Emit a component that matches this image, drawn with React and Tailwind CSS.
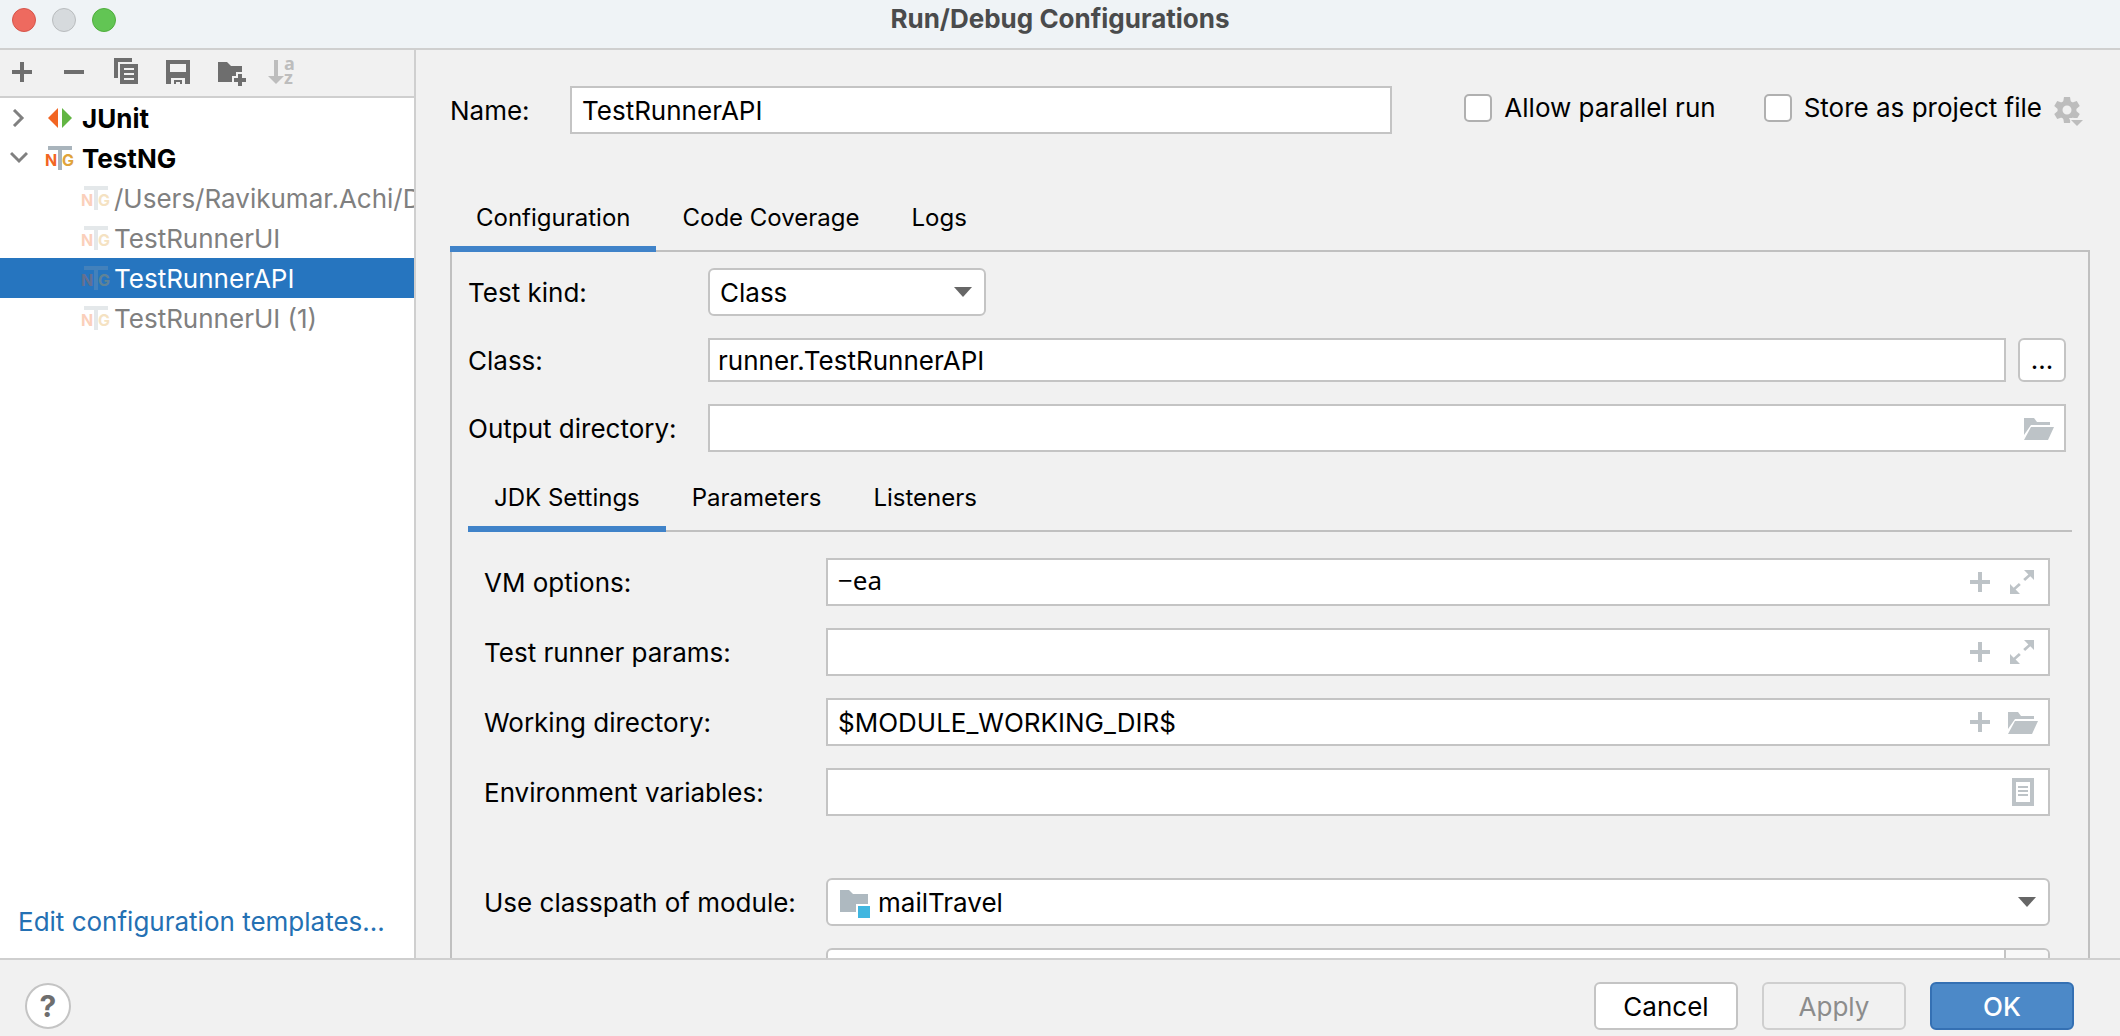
import React from "react";

function Folder({ className = "" }) {
  return (
    <svg width="32" height="32" viewBox="0 0 32 32" className={"shrink-0 " + className} fill="currentColor">
      <path d="M2 6h10l3 4h13v3H9L2 23z" />
      <path d="M9 15h23l-6 13H2z" />
    </svg>
  );
}
function Plus({ className = "" }) {
  return (
    <svg width="32" height="32" viewBox="0 0 32 32" className={"shrink-0 " + className} fill="currentColor">
      <path d="M14 6h4v8h8v4h-8v8h-4v-8H6v-4h8z" />
    </svg>
  );
}
function Expand() {
  return (
    <svg width="32" height="32" viewBox="0 0 32 32" className="shrink-0" fill="currentColor">
      <path d="M18 4h10v10l-3.700-3.700-5.200 4.700-1.900-2 5.200-4.600z" />
      <path d="M14 28H4V18l3.700 3.700 5.200-4.700 1.900 2-5.200 4.600z" />
    </svg>
  );
}
function Doc() {
  return (
    <svg width="32" height="32" viewBox="0 0 32 32" className="shrink-0" fill="currentColor">
      <path fillRule="evenodd" d="M6 2h22v28H6zM10 6v20h14V6z" />
      <path d="M12 10h10v2H12zM12 14h10v2H12zM12 18h10v2H12z" />
    </svg>
  );
}
function NG({ faded }) {
  return (
    <svg width="32" height="32" viewBox="0 0 32 32" className={faded ? "shrink-0 opacity-30" : "shrink-0"}>
      <path d="M4 4h24v4H18v20h-4V8H4z" fill="#9AA7B0" fillOpacity=".85" />
      <text x="1" y="24" fontSize="16" fontWeight="700" fill="#F26522">N</text>
      <text x="18" y="24" fontSize="16" fontWeight="700" fill="#E0A33A">G</text>
    </svg>
  );
}
function Caret() {
  return (
    <svg width="18" height="10" viewBox="0 0 18 10" className="pointer-events-none absolute right-3.5 top-1/2 -translate-y-1/2" fill="#666">
      <path d="M0 0h18L9 10z" />
    </svg>
  );
}

function Field({ id, label, value = "", plain, icons }) {
  return (
    <div className="flex items-center">
      <label htmlFor={id} className="w-[342px] shrink-0 pt-0.5">{label}</label>
      <div className="flex h-12 flex-1 items-center gap-2.5 border-2 border-[#c4c4c4] bg-white pr-2.5 text-[#bdc3c7]">
        <input
          id={id}
          defaultValue={value}
          className={"h-full min-w-0 flex-1 bg-transparent px-2.5 text-black outline-none " + (plain ? "pb-1 font-['Noto_Sans',sans-serif]" : "")}
        />
        {icons}
      </div>
    </div>
  );
}

function Tabs({ items }) {
  return (
    <div role="tablist" className="flex text-2xl">
      {items.map((t, i) => (
        <button
          key={t}
          role="tab"
          aria-selected={i === 0}
          className={"-mb-0.5 h-16 border-b-6 px-[26px] pt-0.5 " + (i === 0 ? "border-[#4083c9]" : "border-transparent")}
        >
          {t}
        </button>
      ))}
    </div>
  );
}

const runs = [
  { name: "/Users/Ravikumar.Achi/Desktop" },
  { name: "TestRunnerUI" },
  { name: "TestRunnerAPI", selected: true },
  { name: "TestRunnerUI (1)" },
];

function Toolbar() {
  return (
    <div className="flex h-12 shrink-0 items-center gap-5 border-b-2 border-[#cfcfcf] px-1.5 pb-0.5 text-[#6e6e6e]">
      <button aria-label="Add"><Plus /></button>
      <button aria-label="Remove">
        <svg width="32" height="32" viewBox="0 0 32 32" fill="currentColor"><path d="M6 14h20v4H6z" /></svg>
      </button>
      <button aria-label="Copy">
        <svg width="32" height="32" viewBox="0 0 32 32" fill="currentColor">
          <path d="M4 2h18v4H8v16H4z" />
          <path fillRule="evenodd" d="M10 8h18v20H10zM14 12v2h10v-2zM14 17v2h10v-2zM14 22v2h10v-2z" />
        </svg>
      </button>
      <button aria-label="Save">
        <svg width="32" height="32" viewBox="0 0 32 32" fill="currentColor">
          <path fillRule="evenodd" d="M4 4h24v24h-5v-6H9v6H4zM8 8v8h16V8z" />
          <path d="M12 24h8v4h-2v-2h-4v2h-2z" />
        </svg>
      </button>
      <button aria-label="New folder">
        <svg width="32" height="32" viewBox="0 0 32 32" fill="currentColor">
          <path d="M4 6h9l4 4h11v6h-6v4h-4v6H4z" />
          <path d="M24 18h4v4h4v4h-4v4h-4v-4h-4v-4h4z" />
        </svg>
      </button>
      <button aria-label="Sort" className="text-[#bdbdbd]">
        <svg width="32" height="32" viewBox="0 0 32 32" fill="currentColor" className="overflow-visible">
          <path d="M8 4h4v16h6l-8 8-8-8h6z" />
          <text x="18" y="14" fontSize="18" fontWeight="700" fontFamily="Noto Sans, sans-serif">a</text>
          <text x="18" y="28" fontSize="18" fontWeight="700" fontFamily="Noto Sans, sans-serif">z</text>
        </svg>
      </button>
    </div>
  );
}

function Sidebar() {
  return (
    <aside className="flex w-[416px] shrink-0 flex-col border-r-2 border-[#cfcfcf]">
      <Toolbar />
      <div className="flex flex-1 flex-col justify-between bg-white">
        <ul>
          <li className="flex h-10 items-center pl-2.5 font-bold">
            <svg width="18" height="18" viewBox="0 0 18 18" className="mr-4" fill="none" stroke="#808080" strokeWidth="3"><path d="M4 1l8 8-8 8" /></svg>
            <svg width="32" height="32" viewBox="0 0 32 32" className="mr-1.5"><path d="M14 6v20L4 16z" fill="#F26522" /><path d="M18 6v20l10-10z" fill="#62B543" /></svg>
            <span className="pt-0.5">JUnit</span>
          </li>
          <li className="flex h-10 items-center pl-2.5 font-bold">
            <svg width="18" height="18" viewBox="0 0 18 18" className="mr-4" fill="none" stroke="#808080" strokeWidth="3"><path d="M1 4l8 8 8-8" /></svg>
            <div className="mr-1.5"><NG /></div>
            <span className="pt-0.5">TestNG</span>
          </li>
          {runs.map((r) => (
            <li
              key={r.name}
              className={"flex h-10 items-center gap-0.5 overflow-hidden whitespace-nowrap pl-20 " + (r.selected ? "bg-[#2675bf] text-white" : "text-[#808080]")}
            >
              <NG faded />
              <span className="pt-0.5">{r.name}</span>
            </li>
          ))}
        </ul>
        <a href="#templates" className="mb-5 px-[18px] whitespace-nowrap text-[#2470b3]">Edit configuration templates...</a>
      </div>
    </aside>
  );
}

function Check({ id, label }) {
  return (
    <div className="flex items-center gap-3 whitespace-nowrap pb-1">
      <input id={id} type="checkbox" className="size-7 appearance-none rounded-[5px] border-2 border-[#b0b0b0] bg-white checked:bg-[#4083c9]" />
      <label htmlFor={id}>{label}</label>
    </div>
  );
}

function Gear() {
  return (
    <svg width="32" height="32" viewBox="0 0 32 32" fill="currentColor">
      <circle cx="15" cy="16" r="7" fill="none" stroke="currentColor" strokeWidth="5" />
      {[0, 60, 120, 180, 240, 300].map((a) => (
        <path key={a} d="M12 3h6l1 6h-8z" transform={`rotate(${a} 15 16)`} />
      ))}
      <path d="M17 24h16v8H21z" fill="#f1f1f1" />
      <path d="M19 26h12l-6 6z" />
    </svg>
  );
}

function Main() {
  return (
    <main className="min-w-0 flex-1 overflow-hidden pl-[34px] pr-[30px] pt-9">
      <div className="flex items-center">
        <label htmlFor="name" className="w-[120px] shrink-0 pt-0.5">Name:</label>
        <input id="name" defaultValue="TestRunnerAPI" className="h-12 min-w-0 flex-1 border-2 border-[#c4c4c4] bg-white px-2.5 outline-none" />
        <div className="ml-[72px] mr-1.5 flex items-center">
          <Check id="parallel" label="Allow parallel run" />
          <div className="ml-12"><Check id="store" label="Store as project file" /></div>
          <button aria-label="Storage options" className="ml-2.5 text-[#bdbdbd]">
            <Gear />
          </button>
        </div>
      </div>

      <div className="mt-[54px]">
        <Tabs items={["Configuration", "Code Coverage", "Logs"]} />
        <section className="h-[800px] border-2 border-[#c0c0c0] px-4 pt-4">
          <div className="flex flex-col gap-[22px] pr-1.5">
            <div className="flex items-center">
              <label htmlFor="kind" className="w-60 shrink-0 pt-0.5">Test kind:</label>
              <div className="relative w-[278px]">
                <select id="kind" className="h-12 w-full appearance-none rounded-md border-2 border-[#c4c4c4] bg-white px-2.5 pt-0.5 outline-none">
                  <option>Class</option>
                </select>
                <Caret />
              </div>
            </div>
            <div className="flex items-center">
              <label htmlFor="class" className="w-60 shrink-0 pt-0.5">Class:</label>
              <input id="class" defaultValue="runner.TestRunnerAPI" className="h-11 min-w-0 flex-1 border-2 border-[#c4c4c4] bg-white px-2 outline-none" />
              <button className="ml-3 h-11 w-12 rounded-md border-2 border-[#c4c4c4] bg-white">...</button>
            </div>
            <div className="flex items-center">
              <label htmlFor="out" className="w-60 shrink-0 whitespace-nowrap pt-0.5">Output directory:</label>
              <div className="flex h-12 flex-1 items-center border-2 border-[#c4c4c4] bg-white pr-2.5 text-[#bdc3c7]">
                <input id="out" className="h-full min-w-0 flex-1 bg-transparent px-2.5 text-black outline-none" />
                <Folder />
              </div>
            </div>
          </div>

          <div className="mt-4">
            <Tabs items={["JDK Settings", "Parameters", "Listeners"]} />
            <div className="flex flex-col gap-[22px] border-t-2 border-[#c0c0c0] pl-4 pr-[22px] pt-[26px]">
              <Field id="vm" label="VM options:" value="−ea" plain icons={<><Plus /><Expand /></>} />
              <Field id="params" label="Test runner params:" icons={<><Plus /><Expand /></>} />
              <Field id="wd" label="Working directory:" value="$MODULE_WORKING_DIR$" icons={<><Plus /><Folder /></>} />
              <Field id="env" label="Environment variables:" icons={<Doc />} />
              <div className="mt-10 flex items-center">
                <label htmlFor="module" className="w-[342px] shrink-0 pt-0.5">Use classpath of module:</label>
                <div className="relative flex-1">
                  <svg width="32" height="32" viewBox="0 0 32 32" className="pointer-events-none absolute left-3 top-2">
                    <path d="M2 4h9l4 4h15v10H18v8H2z" fill="#AEB9C0" />
                    <path d="M20 20h12v12H20z" fill="#40B6E0" />
                  </svg>
                  <select id="module" className="h-12 w-full appearance-none rounded-md border-2 border-[#c4c4c4] bg-white pl-[50px] pt-0.5 outline-none">
                    <option>mailTravel</option>
                  </select>
                  <Caret />
                </div>
              </div>
              <div className="ml-[342px] flex h-12 rounded-md border-2 border-[#c4c4c4] bg-white">
                <div className="flex-1" />
                <div className="w-11 rounded-r border-l-2 border-[#c4c4c4] bg-[#f8f8f8]" />
              </div>
            </div>
          </div>
        </section>
      </div>
    </main>
  );
}

export default function App() {
  return (
    <div className="flex h-screen flex-col overflow-hidden bg-[#f1f1f1] font-['Inter',sans-serif] text-[26px] leading-8 text-black">
      <header className="grid h-[50px] shrink-0 grid-cols-[1fr_auto_1fr] items-start border-b-2 border-[#cfcfcf] bg-[#eff3f6]">
        <div className="flex gap-4 pl-3 pt-2">
          <button aria-label="Close" className="size-6 rounded-full border border-[#d6544a] bg-[#ee6a5f]" />
          <button aria-label="Minimize" className="size-6 rounded-full border border-[#b9bcbe] bg-[#d6dadd]" />
          <button aria-label="Zoom" className="size-6 rounded-full border border-[#4fae3c] bg-[#62c554]" />
        </div>
        <h1 className="pt-[3px] font-bold text-[#4a4b4c]">Run/Debug Configurations</h1>
      </header>
      <div className="flex min-h-0 flex-1">
        <Sidebar />
        <Main />
      </div>
      <footer className="flex h-[78px] shrink-0 items-center border-t-2 border-[#cfcfcf] pl-[25px] pr-[46px] pt-4">
        <button aria-label="Help" className="size-[46px] rounded-full border-2 border-[#c4c4c4] bg-white text-3xl font-bold text-[#6e6e6e]">?</button>
        <div className="ml-auto flex gap-6">
          <button className="h-12 w-36 rounded-md border-2 border-[#c4c4c4] bg-white pt-0.5">Cancel</button>
          <button disabled className="h-12 w-36 rounded-md border-2 border-[#cfcfcf] pt-0.5 text-[#8c8c8c]">Apply</button>
          <button className="h-12 w-36 rounded-md border-2 border-[#3470b3] bg-[#4c89c8] pt-0.5 font-medium text-white">OK</button>
        </div>
      </footer>
    </div>
  );
}
